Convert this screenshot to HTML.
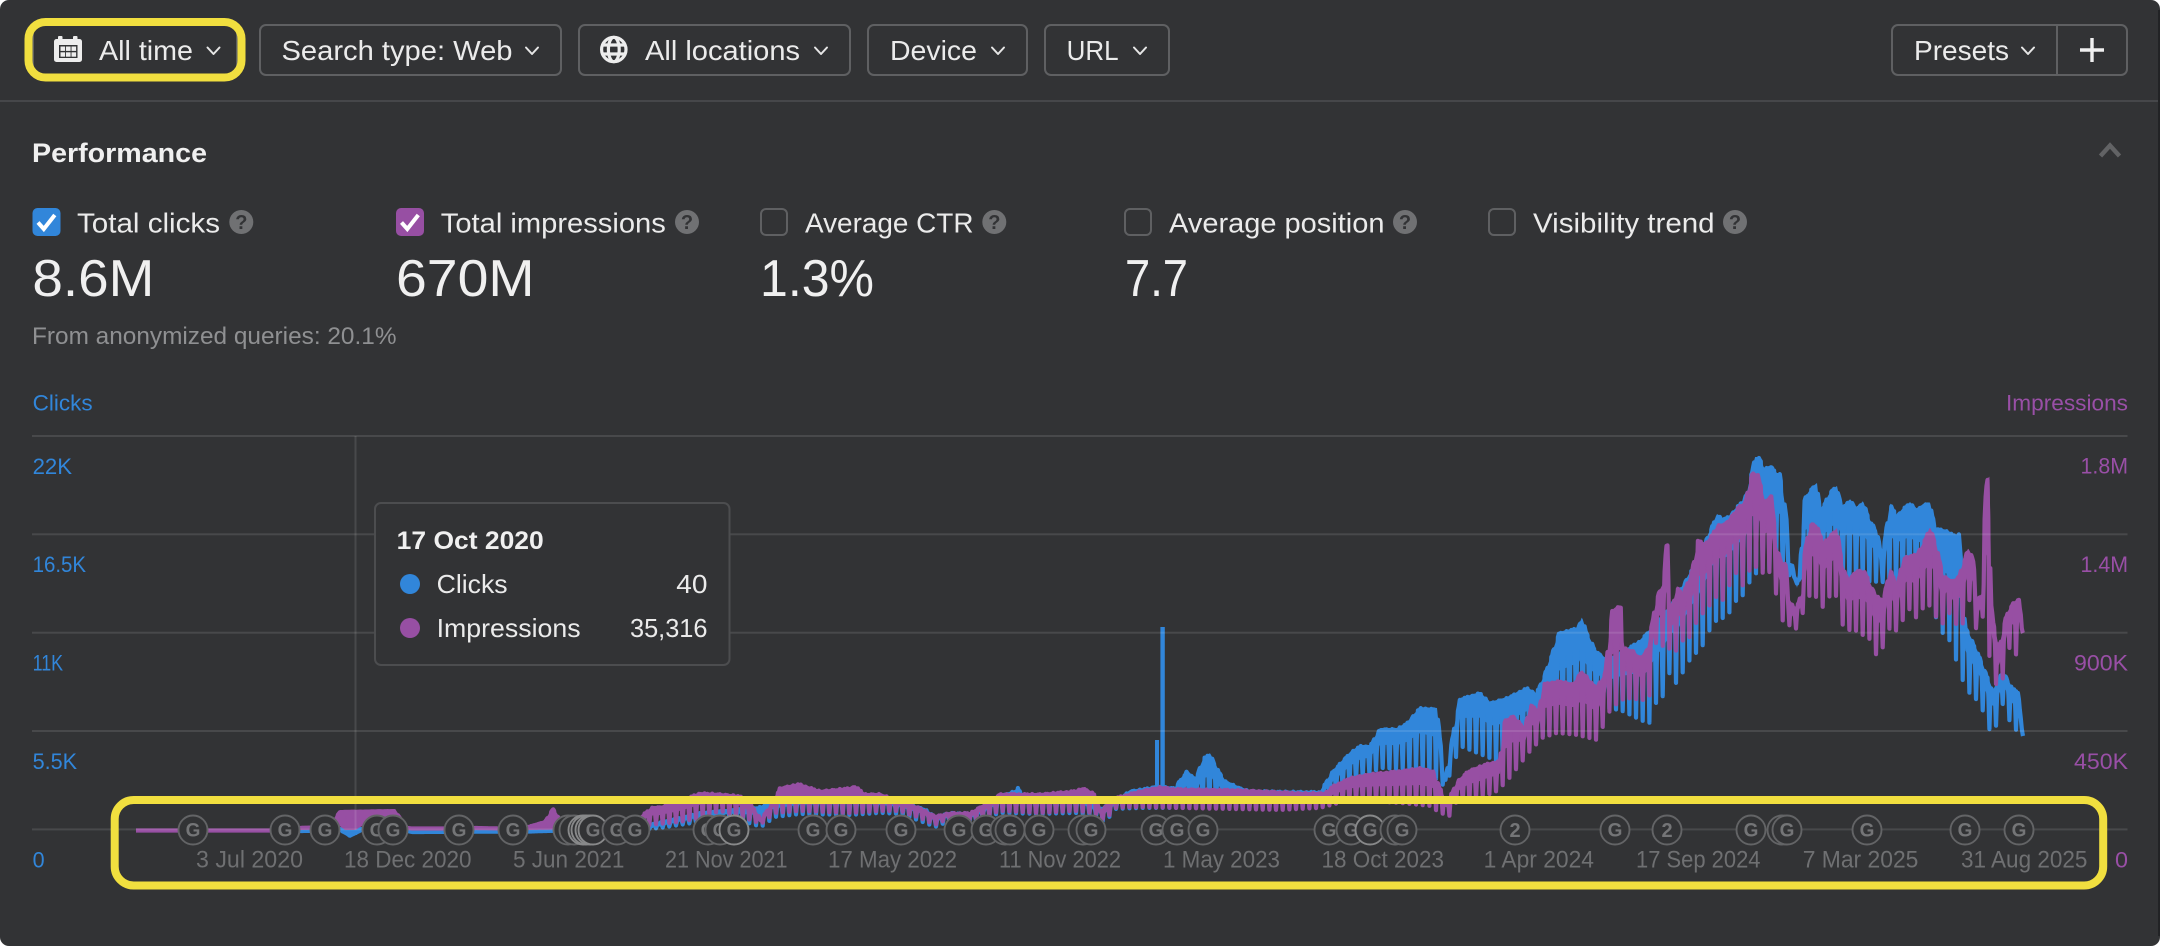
<!DOCTYPE html>
<html lang="en"><head><meta charset="utf-8"><title>Performance</title>
<style>
html,body{margin:0;padding:0;background:#fff;width:2160px;height:946px;overflow:hidden}
svg{display:block}
text{font-family:"Liberation Sans",Arial,sans-serif}
.b{font-size:28px;fill:#ebebeb}
.n{font-size:52px;fill:#f0f0f0}
.h{font-size:20px;font-weight:700;fill:#323335;text-anchor:middle}
.c{font-size:22px;fill:#3186da}
.p{font-size:22px;fill:#994fa6}
.d{font-size:24px;fill:#6f7072}
.m{fill:#323335;stroke:#636466;stroke-width:1.9}
.mb{fill:#323335;stroke:#88898a;stroke-width:1.9}
.g{font-size:19px;font-weight:700;fill:#747577;text-anchor:middle}
.chev{fill:none;stroke:#e6e6e6;stroke-width:2;stroke-linecap:round;stroke-linejoin:round}
.btn{fill:none;stroke:#5f6062;stroke-width:2}
.box{fill:none;stroke:#5f6062;stroke-width:2}
</style></head><body>
<svg xmlns="http://www.w3.org/2000/svg" width="2160" height="946" viewBox="0 0 2160 946">
<rect x="0" y="0" width="2160" height="946" rx="9" fill="#323335"/>
<rect x="2158" y="10" width="2" height="926" fill="#222325"/>

<!-- toolbar -->
<rect x="33" y="25" width="204" height="50" rx="6" class="btn"/>
<rect x="260" y="25" width="301" height="50" rx="6" class="btn"/>
<rect x="579" y="25" width="271" height="50" rx="6" class="btn"/>
<rect x="868" y="25" width="159" height="50" rx="6" class="btn"/>
<rect x="1045" y="25" width="124" height="50" rx="6" class="btn"/>
<rect x="1892" y="25" width="235" height="50" rx="6" class="btn"/>
<rect x="2056" y="25" width="2" height="50" fill="#5f6062"/>

<!-- calendar icon -->
<rect x="54" y="39" width="28" height="23" rx="2.5" fill="#ededed"/>
<rect x="58" y="36" width="4.5" height="6" rx="1" fill="#ededed"/>
<rect x="73" y="36" width="4.5" height="6" rx="1" fill="#ededed"/>
<rect x="59" y="45" width="18.500" height="13" fill="#323335"/>
<g fill="#ededed">
<rect x="60.5" y="46.500" width="4.6" height="4.400"/><rect x="66" y="46.500" width="4.6" height="4.400"/><rect x="71.5" y="46.500" width="4.6" height="4.400"/>
<rect x="60.5" y="52.300" width="4.6" height="4.400"/><rect x="66" y="52.300" width="4.6" height="4.400"/><rect x="71.5" y="52.300" width="4.6" height="4.400"/>
</g>
<text x="99" y="60" class="b" textLength="94" lengthAdjust="spacingAndGlyphs">All time</text>
<path d="M207.5 47.5l6 6.5 6-6.5" class="chev"/>

<text x="281.5" y="60" class="b" textLength="231" lengthAdjust="spacingAndGlyphs">Search type: Web</text>
<path d="M526 47.5l6 6.5 6-6.5" class="chev"/>

<!-- globe icon -->
<g fill="none" stroke="#ededed" stroke-width="3.2">
<circle cx="613.8" cy="49.5" r="12.2"/>
<ellipse cx="613.8" cy="49.5" rx="5.4" ry="12.2"/>
<path d="M602.5 45h22.6M602.5 54h22.6"/>
</g>
<text x="645" y="60" class="b" textLength="155" lengthAdjust="spacingAndGlyphs">All locations</text>
<path d="M815 47.5l6 6.5 6-6.5" class="chev"/>

<text x="890" y="60" class="b" textLength="87" lengthAdjust="spacingAndGlyphs">Device</text>
<path d="M992 47.5l6 6.5 6-6.5" class="chev"/>

<text x="1066.6" y="60" class="b" textLength="52" lengthAdjust="spacingAndGlyphs">URL</text>
<path d="M1134 47.5l6 6.5 6-6.5" class="chev"/>

<text x="1914" y="60" class="b" textLength="95" lengthAdjust="spacingAndGlyphs">Presets</text>
<path d="M2022 47.5l6 6.5 6-6.5" class="chev"/>
<path d="M2092 38v24M2080 50h24" fill="none" stroke="#f0f0f0" stroke-width="3.4"/>

<rect x="0" y="100" width="2158" height="2" fill="#46474a"/>

<!-- header -->
<text x="32" y="162" font-size="27" font-weight="700" fill="#f0f0f0" textLength="175" lengthAdjust="spacingAndGlyphs">Performance</text>
<path d="M2100.5 156l9.5-10.5 9.5 10.5" fill="none" stroke="#626365" stroke-width="4.4"/>

<!-- metrics -->
<rect x="32.5" y="208" width="28" height="28" rx="5" fill="#3186da"/>
<path d="M38 222.500l5.800 6.500 11-14" fill="none" stroke="#fff" stroke-width="4"/>
<text x="77" y="232.5" class="b" textLength="143" lengthAdjust="spacingAndGlyphs">Total clicks</text>
<circle cx="241.3" cy="222" r="12" fill="#707173"/><text x="241.3" y="229" class="h">?</text>
<text x="32.4" y="296" class="n" textLength="122" lengthAdjust="spacingAndGlyphs">8.6M</text>
<text x="32" y="344" font-size="24" fill="#8f9092" textLength="364.500" lengthAdjust="spacingAndGlyphs">From anonymized queries: 20.1%</text>

<rect x="396" y="208" width="28" height="28" rx="5" fill="#974fa3"/>
<path d="M401.500 222.500l5.800 6.500 11-14" fill="none" stroke="#fff" stroke-width="4"/>
<text x="440.8" y="232.5" class="b" textLength="225" lengthAdjust="spacingAndGlyphs">Total impressions</text>
<circle cx="687" cy="222" r="12" fill="#707173"/><text x="687" y="229" class="h">?</text>
<text x="396" y="296" class="n" textLength="138.500" lengthAdjust="spacingAndGlyphs">670M</text>

<rect x="761" y="209" width="26" height="26" rx="5" class="box"/>
<text x="805" y="232.5" class="b" textLength="168.5" lengthAdjust="spacingAndGlyphs">Average CTR</text>
<circle cx="994.3" cy="222" r="12" fill="#707173"/><text x="994.3" y="229" class="h">?</text>
<text x="760" y="296" class="n" textLength="114" lengthAdjust="spacingAndGlyphs">1.3%</text>

<rect x="1125" y="209" width="26" height="26" rx="5" class="box"/>
<text x="1169" y="232.5" class="b" textLength="215.5" lengthAdjust="spacingAndGlyphs">Average position</text>
<circle cx="1405" cy="222" r="12" fill="#707173"/><text x="1405" y="229" class="h">?</text>
<text x="1125" y="296" class="n" textLength="63" lengthAdjust="spacingAndGlyphs">7.7</text>

<rect x="1489" y="209" width="26" height="26" rx="5" class="box"/>
<text x="1533" y="232.5" class="b" textLength="181.6" lengthAdjust="spacingAndGlyphs">Visibility trend</text>
<circle cx="1735" cy="222" r="12" fill="#707173"/><text x="1735" y="229" class="h">?</text>

<!-- axis labels -->
<text x="32.6" y="410.5" class="c" textLength="60" lengthAdjust="spacingAndGlyphs">Clicks</text>
<text x="2006" y="410.5" class="p" textLength="122" lengthAdjust="spacingAndGlyphs">Impressions</text>
<text x="32.6" y="474" class="c" textLength="39.5" lengthAdjust="spacingAndGlyphs">22K</text>
<text x="32.6" y="572" class="c" textLength="53.5" lengthAdjust="spacingAndGlyphs">16.5K</text>
<text x="32.6" y="670.5" class="c" textLength="30.5" lengthAdjust="spacingAndGlyphs">11K</text>
<text x="32.6" y="769" class="c" textLength="44.5" lengthAdjust="spacingAndGlyphs">5.5K</text>
<text x="32.6" y="867.5" class="c" textLength="12" lengthAdjust="spacingAndGlyphs">0</text>
<text x="2080.5" y="473.5" class="p" textLength="47.5" lengthAdjust="spacingAndGlyphs">1.8M</text>
<text x="2080.5" y="572" class="p" textLength="47.5" lengthAdjust="spacingAndGlyphs">1.4M</text>
<text x="2074" y="670.5" class="p" textLength="54" lengthAdjust="spacingAndGlyphs">900K</text>
<text x="2074" y="769" class="p" textLength="54" lengthAdjust="spacingAndGlyphs">450K</text>
<text x="2115" y="867.5" class="p" textLength="13" lengthAdjust="spacingAndGlyphs">0</text>

<!-- chart series -->
<path d="M1162.6 627V790" stroke="#3186da" stroke-width="4.4" fill="none"/>
<path d="M1157 740V790" stroke="#3186da" stroke-width="4" fill="none"/>
<path id="bluef" d="" fill="#3186da"/>
<path id="blue" d="" fill="none" stroke="#3186da" stroke-width="4.2" stroke-linejoin="round"/>
<path id="purplef" d="" fill="#974fa3"/>
<path id="purple" d="" fill="none" stroke="#974fa3" stroke-width="4.2" stroke-linejoin="round"/>

<!-- grid -->
<g fill="rgba(255,255,255,.11)">
<rect x="32" y="435" width="2095.500" height="2"/>
<rect x="32" y="533.300" width="2095.500" height="2"/>
<rect x="32" y="631.700" width="2095.500" height="2"/>
<rect x="32" y="730" width="2095.500" height="2"/>
<rect x="32" y="828.400" width="2095.500" height="2"/>
<rect x="354.500" y="436" width="2" height="394"/>
</g>

<!-- tooltip -->
<rect x="375" y="503" width="354.500" height="162" rx="6" fill="#323335" stroke="#4c4d4f" stroke-width="2"/>
<text x="396.7" y="549" font-size="25" font-weight="700" fill="#f0f0f0" textLength="147" lengthAdjust="spacingAndGlyphs">17 Oct 2020</text>
<circle cx="410" cy="584" r="10" fill="#3186da"/>
<text x="436.6" y="593" class="b" style="font-size:26px" textLength="71" lengthAdjust="spacingAndGlyphs">Clicks</text>
<text x="676.3" y="593" class="b" style="font-size:26px" textLength="31.2" lengthAdjust="spacingAndGlyphs">40</text>
<circle cx="410" cy="628" r="10" fill="#974fa3"/>
<text x="436.6" y="637" class="b" style="font-size:26px" textLength="144" lengthAdjust="spacingAndGlyphs">Impressions</text>
<text x="630" y="637" class="b" style="font-size:26px" textLength="77.5" lengthAdjust="spacingAndGlyphs">35,316</text>

<!-- markers -->
<g>
<g><circle cx="193" cy="830" r="14.500" class="m"/><text x="193" y="836.700" class="g">G</text></g>
<g><circle cx="285" cy="830" r="14.500" class="m"/><text x="285" y="836.700" class="g">G</text></g>
<g><circle cx="325" cy="830" r="14.500" class="m"/><text x="325" y="836.700" class="g">G</text></g>
<g><circle cx="377" cy="830" r="14.500" class="m"/><text x="377" y="836.700" class="g">G</text></g>
<g><circle cx="393" cy="830" r="14.500" class="m"/><text x="393" y="836.700" class="g">G</text></g>
<g><circle cx="459" cy="830" r="14.500" class="m"/><text x="459" y="836.700" class="g">G</text></g>
<g><circle cx="513" cy="830" r="14.500" class="m"/><text x="513" y="836.700" class="g">G</text></g>
<g><circle cx="568" cy="830" r="14.500" class="m"/></g>
<g><circle cx="574" cy="830" r="14.500" class="m"/></g>
<g><circle cx="583" cy="830" r="14.500" class="mb"/></g>
<g><circle cx="586" cy="830" r="14.500" class="mb"/></g>
<g><circle cx="590" cy="830" r="14.500" class="mb"/></g>
<g><circle cx="593" cy="830" r="14.500" class="mb"/><text x="593" y="836.700" class="g">G</text></g>
<g><circle cx="617" cy="830" r="14.500" class="m"/><text x="617" y="836.700" class="g">G</text></g>
<g><circle cx="635" cy="830" r="14.500" class="m"/><text x="635" y="836.700" class="g">G</text></g>
<g><circle cx="708" cy="830" r="14.500" class="m"/><text x="708" y="836.700" class="g">G</text></g>
<g><circle cx="720" cy="830" r="14.500" class="m"/><text x="720" y="836.700" class="g">G</text></g>
<g><circle cx="734" cy="830" r="14.500" class="mb"/><text x="734" y="836.700" class="g">G</text></g>
<g><circle cx="813" cy="830" r="14.500" class="m"/><text x="813" y="836.700" class="g">G</text></g>
<g><circle cx="841" cy="830" r="14.500" class="m"/><text x="841" y="836.700" class="g">G</text></g>
<g><circle cx="901" cy="830" r="14.500" class="m"/><text x="901" y="836.700" class="g">G</text></g>
<g><circle cx="959" cy="830" r="14.500" class="m"/><text x="959" y="836.700" class="g">G</text></g>
<g><circle cx="986" cy="830" r="14.500" class="m"/><text x="986" y="836.700" class="g">G</text></g>
<g><circle cx="1005" cy="830" r="14.500" class="m"/></g>
<g><circle cx="1010" cy="830" r="14.500" class="m"/><text x="1010" y="836.700" class="g">G</text></g>
<g><circle cx="1039" cy="830" r="14.500" class="m"/><text x="1039" y="836.700" class="g">G</text></g>
<g><circle cx="1083" cy="830" r="14.500" class="m"/></g>
<g><circle cx="1091" cy="830" r="14.500" class="m"/><text x="1091" y="836.700" class="g">G</text></g>
<g><circle cx="1156" cy="830" r="14.500" class="m"/><text x="1156" y="836.700" class="g">G</text></g>
<g><circle cx="1177" cy="830" r="14.500" class="m"/><text x="1177" y="836.700" class="g">G</text></g>
<g><circle cx="1203" cy="830" r="14.500" class="m"/><text x="1203" y="836.700" class="g">G</text></g>
<g><circle cx="1329" cy="830" r="14.500" class="m"/><text x="1329" y="836.700" class="g">G</text></g>
<g><circle cx="1351" cy="830" r="14.500" class="m"/><text x="1351" y="836.700" class="g">G</text></g>
<g><circle cx="1370" cy="830" r="14.500" class="mb"/><text x="1370" y="836.700" class="g">G</text></g>
<g><circle cx="1395" cy="830" r="14.500" class="m"/></g>
<g><circle cx="1402" cy="830" r="14.500" class="m"/><text x="1402" y="836.700" class="g">G</text></g>
<g><circle cx="1515" cy="830" r="14.500" class="m"/><text x="1515" y="837" class="g" style="font-size:20px">2</text></g>
<g><circle cx="1615" cy="830" r="14.500" class="m"/><text x="1615" y="836.700" class="g">G</text></g>
<g><circle cx="1667" cy="830" r="14.500" class="m"/><text x="1667" y="837" class="g" style="font-size:20px">2</text></g>
<g><circle cx="1751" cy="830" r="14.500" class="m"/><text x="1751" y="836.700" class="g">G</text></g>
<g><circle cx="1782" cy="830" r="14.500" class="m"/></g>
<g><circle cx="1787" cy="830" r="14.500" class="m"/><text x="1787" y="836.700" class="g">G</text></g>
<g><circle cx="1867" cy="830" r="14.500" class="m"/><text x="1867" y="836.700" class="g">G</text></g>
<g><circle cx="1965" cy="830" r="14.500" class="m"/><text x="1965" y="836.700" class="g">G</text></g>
<g><circle cx="2019" cy="830" r="14.500" class="m"/><text x="2019" y="836.700" class="g">G</text></g>
</g>

<!-- dates -->
<text x="196" y="867.500" class="d" textLength="107" lengthAdjust="spacingAndGlyphs">3 Jul 2020</text>
<text x="344" y="867.500" class="d" textLength="127.500" lengthAdjust="spacingAndGlyphs">18 Dec 2020</text>
<text x="513" y="867.500" class="d" textLength="111.400" lengthAdjust="spacingAndGlyphs">5 Jun 2021</text>
<text x="665" y="867.500" class="d" textLength="122.500" lengthAdjust="spacingAndGlyphs">21 Nov 2021</text>
<text x="828" y="867.500" class="d" textLength="129" lengthAdjust="spacingAndGlyphs">17 May 2022</text>
<text x="999" y="867.500" class="d" textLength="122" lengthAdjust="spacingAndGlyphs">11 Nov 2022</text>
<text x="1163" y="867.500" class="d" textLength="117" lengthAdjust="spacingAndGlyphs">1 May 2023</text>
<text x="1321.500" y="867.500" class="d" textLength="122.500" lengthAdjust="spacingAndGlyphs">18 Oct 2023</text>
<text x="1483.600" y="867.500" class="d" textLength="110.400" lengthAdjust="spacingAndGlyphs">1 Apr 2024</text>
<text x="1636" y="867.500" class="d" textLength="124.500" lengthAdjust="spacingAndGlyphs">17 Sep 2024</text>
<text x="1802.700" y="867.500" class="d" textLength="115.700" lengthAdjust="spacingAndGlyphs">7 Mar 2025</text>
<text x="1961" y="867.500" class="d" textLength="126.400" lengthAdjust="spacingAndGlyphs">31 Aug 2025</text>

<!-- yellow highlights -->
<rect x="28.500" y="22" width="213" height="55.500" rx="17" fill="none" stroke="#f1df3f" stroke-width="8"/>
<rect x="114.700" y="800" width="1988.500" height="85.500" rx="19" fill="none" stroke="#f1df3f" stroke-width="8"/>
</svg>
<script>
(function(){
var BT=[[290,830],[300,830],[335,829],[338,827],[365,827],[405,829],[412,831],[530,830],[600,826],[640,826],[700,812],[760,806],[770,802],[800,797],[860,795],[900,801],[925,808],[935,816],[950,812],[975,812],[985,805],[1000,795],[1015,790],[1018,786],[1022,795],[1080,795],[1100,808],[1115,800],[1130,790],[1150,787],[1155,785],[1175,787],[1178,782],[1187,770],[1195,778],[1204,757],[1210,753],[1218,769],[1225,780],[1240,787],[1250,790],[1320,791],[1333,770],[1350,752],[1360,745],[1370,745],[1380,728],[1397,728],[1407,722],[1420,707],[1437,708],[1440,737],[1445,780],[1453,733],[1460,698],[1480,692],[1490,702],[1507,697],[1527,687],[1536,693],[1543,678],[1552,653],[1559,632],[1578,627],[1582,617],[1587,633],[1596,650],[1608,660],[1640,640],[1670,607],[1697,560],[1717,514],[1723,518],[1730,515],[1738,505],[1743,500],[1747,492],[1755,457],[1760,457],[1764,468],[1771,465],[1777,473],[1780,473],[1783,492],[1787,520],[1788,563],[1792,563],[1797,588],[1800,573],[1803,500],[1812,487],[1817,483],[1820,510],[1832,489],[1837,486],[1842,508],[1850,499],[1857,508],[1863,501],[1870,520],[1877,530],[1882,557],[1890,503],[1897,515],[1903,508],[1910,502],[1917,509],[1923,504],[1930,502],[1935,527],[1947,530],[1955,535],[1959,533],[1962,570],[1965,625],[1978,652],[1985,670],[1993,690],[2003,670],[2012,687],[2018,690],[2023,736]];
var BB=[[290,832],[335,832],[340,832],[345,835],[350,838],[356,835],[362,832],[405,832],[412,833],[500,833],[530,833],[640,832],[660,830],[680,827],[700,824],[720,815],[745,824],[761,829],[775,819],[800,816],[850,817],[880,815],[900,816],[920,823],[935,829],[950,823],[970,824],[985,820],[1000,815],[1040,816],[1075,815],[1095,817],[1105,825],[1115,811],[1140,810],[1175,810],[1280,810],[1330,800],[1350,787],[1380,770],[1420,772],[1440,783],[1445,790],[1460,748],[1497,763],[1540,740],[1573,720],[1600,710],[1620,712],[1643,723],[1650,725],[1656,705],[1663,698],[1670,673],[1676,685],[1683,674],[1689,663],[1696,655],[1703,647],[1709,633],[1716,623],[1723,620],[1729,615],[1736,603],[1743,597],[1749,585],[1760,570],[1800,580],[1900,585],[1930,600],[1940,632],[1950,643],[1963,683],[1970,696],[1977,702],[1983,713],[1990,733],[1997,727],[2003,705],[2010,724],[2017,733],[2023,736]];
var PT=[[136,830],[285,830],[300,826],[330,825],[336,815],[340,810],[395,809],[407,826],[412,827],[470,827],[475,826],[500,827],[528,825],[545,820],[553,807],[560,818],[568,815],[590,817],[600,822],[635,820],[645,812],[653,806],[660,806],[680,800],[700,792],[720,793],[740,795],[752,805],[761,818],[770,805],[780,787],[799,783],[820,790],[850,787],[855,785],[865,793],[880,793],[900,800],[920,807],[935,815],[950,812],[970,812],[985,803],[1000,793],[1040,793],[1075,790],[1083,787],[1095,793],[1100,810],[1115,797],[1140,790],[1160,786],[1175,788],[1240,789],[1300,792],[1325,792],[1333,785],[1350,777],[1370,773],[1400,770],[1420,767],[1433,770],[1440,787],[1446,800],[1450,795],[1458,780],[1468,770],[1486,763],[1500,760],[1504,720],[1513,715],[1525,727],[1530,703],[1539,710],[1543,683],[1559,680],[1573,683],[1582,670],[1596,687],[1605,673],[1612,610],[1617,606],[1621,606],[1624,647],[1633,650],[1640,657],[1647,649],[1653,617],[1658,593],[1664,582],[1666,544],[1669,544],[1670,607],[1673,603],[1677,586],[1682,593],[1685,588],[1692,570],[1698,539],[1705,543],[1712,534],[1718,524],[1725,523],[1732,515],[1738,506],[1745,502],[1752,472],[1758,474],[1765,501],[1771,493],[1777,547],[1782,563],[1786,562],[1788,597],[1795,608],[1802,593],[1805,547],[1811,522],[1817,525],[1823,542],[1830,535],[1837,528],[1842,562],[1848,580],[1857,569],[1865,571],[1872,587],[1877,595],[1883,600],[1890,567],[1897,587],[1903,557],[1910,555],[1917,553],[1923,543],[1930,527],[1936,543],[1943,575],[1953,580],[1959,575],[1968,548],[1973,557],[1977,598],[1983,593],[1985,500],[1987,479],[1990,476],[1991,600],[1993,619],[1999,648],[2006,615],[2012,603],[2019,598],[2023,633]];
var PB=[[136,831],[285,831],[300,830],[335,829],[340,826],[345,830],[355,830],[362,826],[395,826],[407,830],[500,830],[530,830],[640,828],[660,826],[680,824],[700,820],[720,813],[745,820],[761,826],[775,815],[800,813],[850,815],[880,813],[900,813],[920,820],[935,827],[950,820],[970,822],[985,818],[1000,813],[1040,815],[1075,813],[1095,815],[1105,823],[1115,810],[1140,809],[1175,810],[1280,812],[1320,810],[1350,802],[1400,805],[1430,808],[1440,815],[1450,818],[1455,805],[1480,800],[1497,793],[1507,783],[1517,770],[1530,753],[1542,740],[1557,735],[1577,737],[1597,742],[1611,710],[1625,700],[1643,702],[1650,697],[1656,645],[1663,648],[1670,651],[1677,653],[1683,642],[1689,640],[1696,625],[1703,615],[1709,608],[1716,599],[1723,602],[1729,588],[1736,575],[1743,588],[1749,573],[1755,568],[1762,575],[1769,573],[1775,591],[1782,622],[1789,627],[1795,633],[1802,617],[1809,598],[1815,597],[1822,610],[1829,599],[1835,593],[1842,626],[1848,632],[1855,632],[1862,637],[1868,637],[1875,657],[1882,652],[1888,630],[1895,634],[1902,624],[1908,609],[1915,621],[1921,612],[1928,606],[1934,613],[1941,632],[1947,609],[1953,625],[1962,628],[1970,600],[1977,635],[1983,618],[1990,662],[1997,690],[2003,680],[2010,647],[2017,658],[2023,633]];
function f(a,x){
  if(x<=a[0][0])return a[0][1];
  for(var i=1;i<a.length;i++){
    if(x<=a[i][0]){var p=a[i-1],q=a[i];return p[1]+(q[1]-p[1])*(x-p[0])/((q[0]-p[0])||1);}
  }
  return a[a.length-1][1];
}
function build(T,B,seed,x0,k){
  var s="",w=.9524,d=Math.ceil((x0-136)/w),x,first=true,up=[],dn=[];
  while(true){
    x=136+d*w; if(x>2023)x=2023;
    var t0=f(T,x),b0=f(B,x),t=t0,b=b0;
    if(b-t>4.2){t+=2.1;b-=2.1;}else{t=b=(t+b)/2;}
    var ph=d%7,y,amp=x>640?1.1:0;
    if(ph===0)y=b;
    else if(ph===1||ph===6)y=t+(b-t)*.35;
    else y=t+amp*Math.sin(d*2.3+seed);
    s+=(first?"M":"L")+x.toFixed(1)+" "+y.toFixed(1);first=false;
    var kk=x<640?1:k;
    up.push(x.toFixed(1)+" "+t0.toFixed(1));
    dn.unshift(x.toFixed(1)+" "+(t0+(b0-t0)*kk).toFixed(1));
    if(x>=2023)break;
    d++;
  }
  return [s,"M"+up.join("L")+"L"+dn.join("L")+"Z"];
}
var b=build(BT,BB,0,290,.4),p=build(PT,PB,1.7,136,.45);
document.getElementById("blue").setAttribute("d",b[0]);
document.getElementById("bluef").setAttribute("d",b[1]);
document.getElementById("purple").setAttribute("d",p[0]);
document.getElementById("purplef").setAttribute("d",p[1]);
})();
</script>
</body></html>
